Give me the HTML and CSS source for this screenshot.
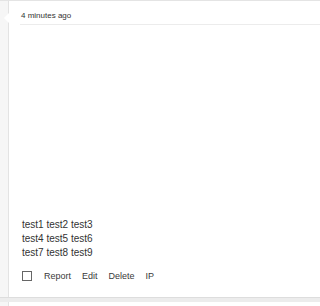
FILE: index.html
```html
<!DOCTYPE html>
<html>
<head>
<meta charset="utf-8">
<link rel="stylesheet" href="styles.css">
</head>
<body>
<div class="topline"></div>
<div class="thread">
  <div class="gutter"></div>
  <div class="post">
    <span class="arrow"></span>
    <div class="header">4 minutes ago</div>
    <div class="media"></div>
    <div class="text">
      <div>test1 test2 test3</div>
      <div>test4 test5 test6</div>
      <div>test7 test8 test9</div>
    </div>
    <div class="actions">
      <span class="check"></span>
      <span class="act">Report</span>
      <span class="act">Edit</span>
      <span class="act">Delete</span>
      <span class="act">IP</span>
    </div>
  </div>
</div>
<div class="separator"></div>
<div class="thread next">
  <div class="gutter"></div>
  <div class="post"></div>
</div>
</body>
</html>
```
FILE: styles.css
```css
html, body {
  margin: 0;
  padding: 0;
  background: #ffffff;
  font-family: "Liberation Sans", Arial, sans-serif;
  color: #333333;
}
.topline {
  height: 1px;
  background: #e4e4e4;
}
.thread {
  display: flex;
  height: 296px;
}
.thread.next {
  height: 4px;
}
.gutter {
  width: 8px;
  background: #f6f6f6;
  border-right: 1px solid #e3e3e3;
}
.post {
  flex: 1;
  position: relative;
  display: flex;
  flex-direction: column;
  background: #ffffff;
}
.arrow {
  position: absolute;
  left: -5px;
  top: 12px;
  width: 0;
  height: 0;
  border-top: 5px solid transparent;
  border-bottom: 5px solid transparent;
  border-right: 5px solid #ffffff;
}
.header {
  margin-left: 11px;
  padding: 10px 0 3px 1px;
  font-size: 8px;
  line-height: 10px;
  color: #333333;
  border-bottom: 1px solid #ececec;
}
.media {
  height: 193px;
}
.text {
  margin-left: 13px;
  font-size: 10px;
  line-height: 14px;
  color: #333333;
}
.actions {
  display: flex;
  align-items: center;
  gap: 11px;
  margin: 9px 0 0 13px;
  height: 14px;
  font-size: 9px;
  color: #3a3a3a;
}
.check {
  width: 8px;
  height: 8px;
  border: 1px solid #666666;
  margin-right: 1px;
}
.separator {
  height: 4px;
  background: #ececec;
  border-top: 1px solid #dddddd;
}
```
